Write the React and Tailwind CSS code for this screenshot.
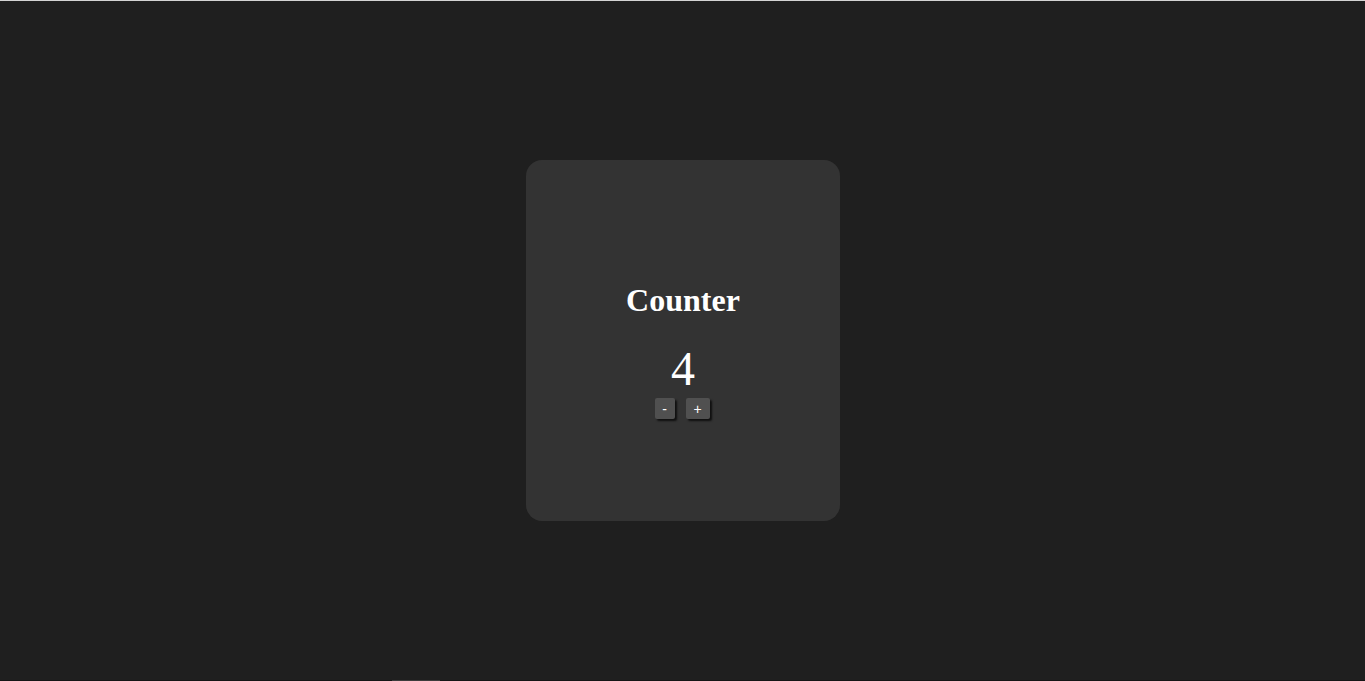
export default function App() {
  return (
    <div className="h-[681px] w-full flex flex-col bg-[#1f1f1f] overflow-hidden">
      <div className="h-px w-full bg-[#d4d4d4]" />
      <div className="flex-1 flex items-center justify-center">
        <div className="w-[314px] h-[361px] ml-px rounded-[16px] bg-[#333333] flex flex-col items-center pt-[122px] text-white">
          <h1 className="font-['Liberation_Serif',serif] font-bold text-[32px] leading-[36px]">Counter</h1>
          <div className="mt-[24px] font-['Liberation_Serif',serif] text-[48px] leading-[53px]">4</div>
          <div className="mt-[3px] mr-[2px] flex gap-[11px] font-['Liberation_Sans',Arial,sans-serif]">
            <button className="w-[20px] h-[21px] text-[14px] leading-[16px] bg-[#505050] text-white rounded-[2px] shadow-[2px_2px_2px_rgba(0,0,0,0.7)]">-</button>
            <button className="w-[24px] h-[21px] text-[14px] leading-[16px] bg-[#505050] text-white rounded-[2px] shadow-[2px_2px_2px_rgba(0,0,0,0.7)]">+</button>
          </div>
        </div>
      </div>
      <div className="h-px w-full flex bg-[#151515]">
        <div className="w-[392px]" />
        <div className="w-[48px] bg-[#3c3c3c]" />
      </div>
    </div>
  );
}
